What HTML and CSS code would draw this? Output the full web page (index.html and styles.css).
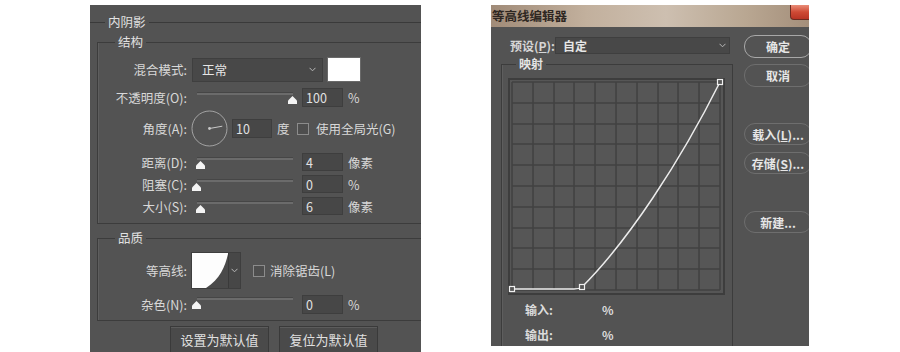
FILE: index.html
```html
<!DOCTYPE html>
<html lang="zh-CN">
<head>
    <meta charset="UTF-8">
    <title>内阴影 / 等高线编辑器</title>
    <link rel="stylesheet" href="styles.css">
</head>
<body>
<div class="stage">

    <!-- 图层样式: 内阴影 -->
    <section class="panel effect">
        <fieldset class="group outer">
            <legend>内阴影</legend>

            <fieldset class="group box structure">
                <legend>结构</legend>

                <div class="row r-blend">
                    <span class="label">混合模式:</span>
                    <div class="select blend">
                        <span>正常</span>
                        <svg class="chev" width="7" height="5" viewBox="0 0 7 5"><path d="M0.5 0.8 L3.5 3.8 L6.5 0.8" fill="none" stroke="#b8b8b8" stroke-width="1"/></svg>
                    </div>
                    <div class="swatch"></div>
                </div>

                <div class="row r-opacity">
                    <span class="label">不透明度(O):</span>
                    <div class="slider"><span class="thumb" style="left: 96px"></span></div>
                    <div class="field">100</div>
                    <span class="unit">%</span>
                </div>

                <div class="row r-angle">
                    <span class="label">角度(A):</span>
                    <svg class="dial" width="37" height="37" viewBox="0 0 37 37">
                        <circle cx="18.5" cy="18.5" r="17.5" fill="none" stroke="#a3a3a3" stroke-width="1"/>
                        <line x1="18.5" y1="18.5" x2="31.3" y2="16.2" stroke="#c8c8c8" stroke-width="1"/>
                        <circle cx="18.5" cy="18.5" r="1.4" fill="#c8c8c8"/>
                    </svg>
                    <div class="field short">10</div>
                    <span class="unit deg">度</span>
                    <span class="check"></span>
                    <span class="check-label">使用全局光(G)</span>
                </div>

                <div class="row r-slide">
                    <span class="label">距离(D):</span>
                    <div class="slider"><span class="thumb" style="left: 4px"></span></div>
                    <div class="field">4</div>
                    <span class="unit">像素</span>
                </div>

                <div class="row r-slide">
                    <span class="label">阻塞(C):</span>
                    <div class="slider"><span class="thumb" style="left: 0px"></span></div>
                    <div class="field">0</div>
                    <span class="unit">%</span>
                </div>

                <div class="row r-slide">
                    <span class="label">大小(S):</span>
                    <div class="slider"><span class="thumb" style="left: 4px"></span></div>
                    <div class="field">6</div>
                    <span class="unit">像素</span>
                </div>
            </fieldset>

            <fieldset class="group box quality">
                <legend>品质</legend>

                <div class="row r-contour">
                    <span class="label">等高线:</span>
                    <div class="contour-pick">
                        <svg width="36" height="35" viewBox="0 0 36 35">
                            <rect width="36" height="35" fill="#fdfdfd"/>
                            <path d="M36 1 C33 14 28 26 14 35 L36 35 Z" fill="#4a4a4a"/>
                        </svg>
                        <span class="pick-arrow">
                            <svg width="7" height="5" viewBox="0 0 7 5"><path d="M0.5 0.8 L3.5 3.8 L6.5 0.8" fill="none" stroke="#b8b8b8" stroke-width="1"/></svg>
                        </span>
                    </div>
                    <span class="check"></span>
                    <span class="check-label">消除锯齿(L)</span>
                </div>

                <div class="row r-noise">
                    <span class="label">杂色(N):</span>
                    <div class="slider"><span class="thumb" style="left: 0px"></span></div>
                    <div class="field">0</div>
                    <span class="unit">%</span>
                </div>
            </fieldset>
        </fieldset>

        <div class="defaults">
            <button class="btn">设置为默认值</button>
            <button class="btn">复位为默认值</button>
        </div>
    </section>

    <!-- 等高线编辑器 -->
    <section class="panel contour">
        <header class="titlebar">
            <span class="title">等高线编辑器</span>
            <span class="close"></span>
        </header>

        <div class="cbody">
            <div class="main">
                <div class="preset">
                    <span class="preset-label">预设(<u>P</u>):</span>
                    <div class="select preset-select">
                        <span>自定</span>
                        <svg class="chev" width="7" height="5" viewBox="0 0 7 5"><path d="M0.5 0.8 L3.5 3.8 L6.5 0.8" fill="none" stroke="#b8b8b8" stroke-width="1"/></svg>
                    </div>
                </div>

                <fieldset class="group box mapping">
                    <legend>映射</legend>
                    <svg class="graph" width="217" height="217" viewBox="0 0 217 217">
                        <rect x="1" y="1" width="215" height="215" fill="#565656" stroke="#3d3d3d" stroke-width="2"/>
                        <g stroke="#424242" stroke-width="1.6">
                            <path d="M4 4 V212 M25 4 V212 M46 4 V212 M66 4 V212 M87 4 V212 M108 4 V212 M129 4 V212 M150 4 V212 M170 4 V212 M191 4 V212 M212 4 V212"/>
                            <path d="M4 4 H212 M4 25 H212 M4 46 H212 M4 66 H212 M4 87 H212 M4 108 H212 M4 129 H212 M4 150 H212 M4 170 H212 M4 191 H212 M4 212 H212"/>
                        </g>
                        <path d="M4 211 L66 211 Q71 211 74 209 C120 163 172 84 212 4" fill="none" stroke="#ececec" stroke-width="1.5"/>
                        <g fill="#565656" stroke="#f0f0f0" stroke-width="1.2">
                            <rect x="1.5" y="208.5" width="5" height="5"/>
                            <rect x="71.5" y="206.5" width="5" height="5"/>
                            <rect x="209.5" y="1.5" width="5" height="5"/>
                        </g>
                    </svg>
                    <div class="readout first"><span class="ro-label">输入:</span><span>%</span></div>
                    <div class="readout"><span class="ro-label">输出:</span><span>%</span></div>
                </fieldset>
            </div>

            <div class="actions">
                <button class="pill primary">确定</button>
                <button class="pill cancel">取消</button>
                <button class="pill load">载入(<u>L</u>)...</button>
                <button class="pill save">存储(<u>S</u>)...</button>
                <button class="pill new">新建...</button>
            </div>
        </div>
    </section>

</div>
</body>
</html>
```

FILE: styles.css
```css
body {
    margin: 0;
    background-color: #fff;
    font-family: "Noto Sans CJK SC", "Liberation Sans", sans-serif;
}

.stage {
    display: flex;
    align-items: flex-start;
    gap: 70px;
    height: 352px;
    padding: 5px 0 0 90px;
    box-sizing: border-box;
}

.panel {
    background-color: #535353;
    overflow: hidden;
    box-sizing: border-box;
}

/* ---------- left: 内阴影 ---------- */

.effect {
    width: 331px;
    height: 347px;
    padding-top: 9px;
    color: #d8d8d8;
    font-size: 12.5px;
}

.group {
    margin: 0;
    padding: 0;
    border: 0;
    min-width: 0;
}

.group > legend {
    padding: 0 3px;
    line-height: 16px;
    color: #e2e2e2;
}

.outer {
    border-top: 1px solid #3a3a3a;
    padding-left: 7px;
}

.outer > legend {
    margin-left: 8px;
}

.box {
    border: 1px solid #3c3c3c;
    box-shadow: inset 1px 0 0 #5e5e5e;
}

.box > legend {
    margin-left: 17px;
}

.structure {
    margin: 4px -20px 0 0;
    padding: 7px 0 6px;
}

.quality {
    margin: 6px -20px 0 0;
    padding: 7px 0 6px;
}

.row {
    display: flex;
    align-items: center;
    height: 22px;
}

.label {
    flex: none;
    width: 89px;
    margin-right: 5px;
    text-align: right;
    white-space: nowrap;
}

.r-blend { height: 25px; }
.r-opacity { margin-top: 4px; }
.r-angle { height: 37px; margin-top: 2px; }
.r-angle + .r-slide { margin-top: 4px; }
.r-contour { height: 35px; }
.r-noise { height: 20px; margin-top: 6px; }

.select {
    display: flex;
    align-items: center;
    justify-content: space-between;
    box-sizing: border-box;
    background-color: #484848;
    border: 1px solid #3f3f3f;
    color: #e6e6e6;
}

.blend {
    width: 131px;
    height: 24px;
    padding: 0 6px 0 9px;
}

.swatch {
    width: 34px;
    height: 25px;
    margin-left: 4px;
    background-color: #fff;
    box-sizing: border-box;
    border: 1px solid #6a6a6a;
}

.slider {
    position: relative;
    flex: none;
    width: 110px;
    height: 22px;
}

.slider::before {
    content: "";
    position: absolute;
    left: 5px;
    width: 96px;
    top: 6px;
    height: 2px;
    background-color: #6b6b6b;
    border-top: 1px solid #464646;
}

.thumb {
    position: absolute;
    top: 10px;
    width: 9px;
    height: 8px;
    background-color: #f4f4f4;
    clip-path: polygon(50% 0, 100% 55%, 100% 100%, 0 100%, 0 55%);
}

.r-noise .slider { height: 20px; }
.r-noise .slider::before { top: 3px; }
.r-noise .thumb { top: 7px; }

.field {
    flex: none;
    width: 41px;
    height: 18px;
    box-sizing: border-box;
    padding-left: 3px;
    line-height: 17px;
    background-color: #474747;
    border: 1px solid #3e3e3e;
    color: #e2e2e2;
}

.r-opacity .field,
.r-noise .field {
    height: 19px;
    line-height: 18px;
}

.field.short {
    width: 40px;
    height: 19px;
    margin-left: 4px;
    line-height: 18px;
}

.unit {
    margin-left: 5px;
}

.unit.deg {
    width: 20px;
}

.dial {
    flex: none;
    margin-left: -1px;
}

.check {
    flex: none;
    width: 12px;
    height: 12px;
    box-sizing: border-box;
    border: 1px solid #8c8c8c;
    background-color: #4e4e4e;
}

.check-label {
    margin-left: 7px;
    white-space: nowrap;
}

.contour-pick {
    display: flex;
    margin-left: -1px;
    border: 1px solid #3e3e3e;
}

.contour-pick svg {
    display: block;
}

.pick-arrow {
    display: flex;
    align-items: center;
    justify-content: center;
    width: 11px;
    background-color: #474747;
    border-left: 1px solid #3a3a3a;
}

.r-contour .check {
    margin-left: 12px;
}

.r-contour .check-label {
    margin-left: 5px;
}

.defaults {
    display: flex;
    gap: 10px;
    margin-top: 5px;
    padding-left: 80px;
}

.btn {
    width: 99px;
    height: 27px;
    padding: 0;
    font-family: inherit;
    font-size: 13px;
    color: #e0e0e0;
    background-color: #4a4a4a;
    border: 1px solid #3a3a3a;
    box-shadow: inset 0 1px 0 #5c5c5c;
}

/* ---------- right: 等高线编辑器 ---------- */

.contour {
    width: 318px;
    height: 341px;
    color: #e4e4e4;
    font-size: 12px;
    font-weight: bold;
}

.contour u {
    text-decoration: underline;
}

.titlebar {
    display: flex;
    justify-content: space-between;
    align-items: flex-start;
    height: 22px;
    background: linear-gradient(to right, #a08b78, #c2b09d 30%, #cdbfb0 55%, #b9a792 80%, #a48f7b);
}

.title {
    line-height: 22px;
    padding-left: 1px;
    color: #2e2722;
    font-size: 12.5px;
}

.close {
    width: 22px;
    height: 15px;
    margin-right: -3px;
    box-sizing: border-box;
    border: 1px solid #6d2a20;
    border-top: 0;
    border-radius: 0 0 0 4px;
    background: linear-gradient(#e98d78, #cf4a35 50%, #b83424);
}

.cbody {
    display: flex;
}

.main {
    width: 242px;
    flex: none;
}

.preset {
    display: flex;
    align-items: center;
    height: 17px;
    margin-top: 10px;
    padding-left: 19px;
}

.preset-label {
    width: 45px;
    color: #d6d6d6;
}

.preset-select {
    width: 175px;
    height: 17px;
    padding: 0 3px 0 7px;
    font-weight: bold;
}

.mapping {
    margin: 2px 0 0 10px;
    height: 320px;
    border-bottom: 0;
}

.mapping > legend {
    margin-left: 14px;
    color: #e4e4e4;
}

.graph {
    display: block;
    margin: 6px 0 0 6px;
}

.readout {
    display: flex;
    align-items: center;
    height: 16px;
    margin-top: 9px;
    padding-left: 23px;
    color: #dcdcdc;
}

.readout.first {
    margin-top: 6px;
}

.ro-label {
    width: 77px;
}

.actions {
    display: flex;
    flex-direction: column;
    margin-left: 11px;
}

.pill {
    flex: none;
    width: 68px;
    height: 22px;
    padding: 0;
    font-family: inherit;
    font-size: 12px;
    font-weight: bold;
    color: #e6e6e6;
    background-color: #535353;
    border: 1px solid #6e6e6e;
    border-radius: 11px;
}

.pill.primary {
    height: 23px;
    margin-top: 8px;
    border-color: #a8a8a8;
}

.pill.cancel { margin-top: 6px; height: 23px; }
.pill.load { margin-top: 36px; }
.pill.save { margin-top: 7px; }
.pill.new { margin-top: 37px; }
```
